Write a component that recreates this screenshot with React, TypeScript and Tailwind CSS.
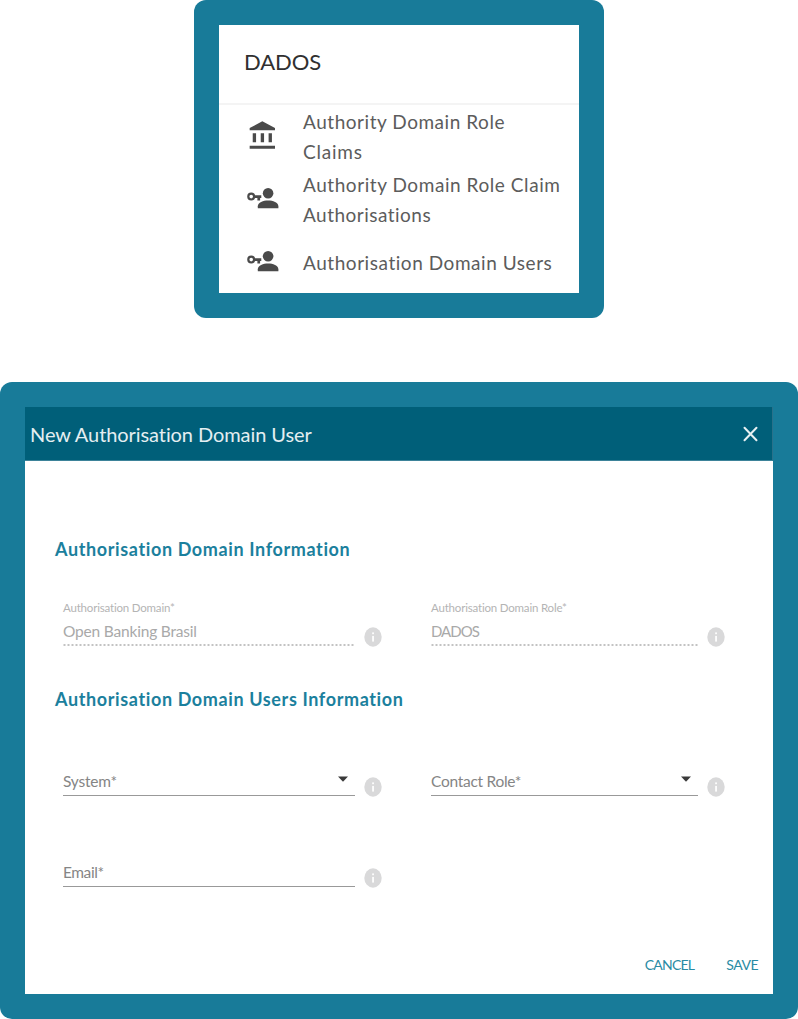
import type { ReactNode } from "react";

function BankIcon() {
  return (
    <svg width="32" height="32" viewBox="0 0 24 24" fill="#4a4a4a" className="ml-px">
      <path d="M4.300 10v6.600h2.500V10H4.300zm6 0v6.600h2.500V10h-2.500zM2 21.600h19v-2.300H2v2.300zM16.200 10v6.600h2.500V10h-2.500zM11.500 1L2 6v1.700h19V6l-9.500-5z" />
    </svg>
  );
}

function UserKeyIcon() {
  return (
    <svg width="34" height="24" viewBox="0 0 34 24" fill="#4a4a4a" className="mb-[2px]">
      <circle cx="22.100" cy="7.200" r="5.300" />
      <path d="M11.800 22.300v-2c0-4 5.500-5.900 10.300-5.900s10.300 1.900 10.300 5.900v2z" />
      <circle cx="5.200" cy="10.600" r="2.900" fill="none" stroke="#4a4a4a" strokeWidth="2.200" />
      <path d="M8 9.300h7.300v2.700h-1.200v2.400h-2.700v-2.400H8z" />
    </svg>
  );
}

function InfoIcon() {
  return (
    <svg width="18" height="20" viewBox="0 0 18 20" className="shrink-0">
      <ellipse cx="9" cy="10" rx="8.700" ry="9.700" fill="#d9d9da" />
      <rect x="8.200" y="5.400" width="1.700" height="1.800" fill="#fff" />
      <rect x="8.200" y="8.900" width="1.700" height="5.700" fill="#fff" />
    </svg>
  );
}

function MenuItem({ icon, children }: { icon: ReactNode; children: ReactNode }) {
  return (
    <li className="flex h-[62.700px] items-center">
      <span className="flex w-[84px] shrink-0 pl-[27px]">{icon}</span>
      <span className="pt-[2px] text-[19px] leading-[30px] whitespace-nowrap text-[#5c5c5c]">{children}</span>
    </li>
  );
}

function DisabledField({ label, value, width }: { label: string; value: ReactNode; width: string }) {
  return (
    <div className="flex items-end">
      <div className={`${width} h-[47px]`}>
        <div className="h-[18px] text-[11.500px] leading-[18px] tracking-[-0.190px] whitespace-nowrap text-[#b4b4b4]">{label}</div>
        <div className="h-[27px] pt-[2px] text-[15.500px] leading-6 whitespace-nowrap text-[#a9a9a9]">{value}</div>
        <svg width="100%" height="2" className="block">
          <line x1="0.500" y1="1" x2="100%" y2="1" stroke="#b0b0b0" strokeWidth="1.600" strokeDasharray="2 2" />
        </svg>
      </div>
      <div className="ml-[9px] -mb-px">
        <InfoIcon />
      </div>
    </div>
  );
}

function Field({ label, width, select = false }: { label: ReactNode; width: string; select?: boolean }) {
  return (
    <div className="flex items-end">
      <div className={`${width} flex h-[28px] justify-between border-b border-[#999] pr-[6px]`}>
        <span className="pt-px text-[15.500px] leading-[25px] whitespace-nowrap text-[#858585]">{label}</span>
        {select && (
          <svg width="12" height="6" viewBox="0 0 12 6" className="mt-[8px]" fill="#3a3a3a">
            <path d="M1 0.500h10L6 5.700z" />
          </svg>
        )}
      </div>
      <div className="ml-[9px] -mb-px">
        <InfoIcon />
      </div>
    </div>
  );
}

export default function App() {
  return (
    <div className="flex h-[1019px] w-[798px] flex-col items-center justify-between bg-white font-['Lato',sans-serif]">
      <section className="h-[318px] w-[410px] rounded-[12px] bg-[#187b99] p-[25px]">
        <div className="h-[268px] overflow-hidden bg-white">
          <h2 className="h-[80px] border-b-2 border-[#f4f4f4] pt-[22px] pl-[25px] text-[22px] leading-[30px] tracking-[-0.100px] text-[#303030]">DADOS</h2>
          <ul>
            <MenuItem icon={<BankIcon />}>
              <span className="tracking-[0.540px]">Authority Domain Role</span>
              <br />
              <span className="tracking-[0.790px]">Claims</span>
            </MenuItem>
            <MenuItem icon={<UserKeyIcon />}>
              <span className="tracking-[0.560px]">Authority Domain Role Claim</span>
              <br />
              <span className="tracking-[0.480px]">Authorisations</span>
            </MenuItem>
            <MenuItem icon={<UserKeyIcon />}>
              <span className="tracking-[0.550px]">Authorisation Domain Users</span>
            </MenuItem>
          </ul>
        </div>
      </section>

      <section className="h-[637px] w-full rounded-[12px] bg-[#187b99] p-[25px]">
        <div className="flex h-[587px] flex-col bg-white">
          <header className="flex h-[54px] items-center justify-between border-r border-b border-r-[#2a718a] border-b-[#3d8399] bg-[#005f79] pr-[14px] pl-[5px]">
            <h1 className="text-[20px] leading-[26px] tracking-[-0.080px] text-[#e4eef1]">New Authorisation Domain User</h1>
            <svg width="15" height="16" viewBox="0 0 15 16" fill="none" stroke="#e8f1f3" strokeWidth="2" strokeLinecap="round">
              <path d="M1.500 1.700L13.500 14.300M13.500 1.700L1.500 14.300" />
            </svg>
          </header>
          <div className="flex flex-1 flex-col pl-[30px]">
            <h3 className="mt-[75px] h-[26px] text-[18px] leading-[26px] font-bold tracking-[0.620px] text-[#1b809d]">Authorisation Domain Information</h3>
            <div className="mt-[37px] ml-[8px] grid grid-cols-[368px_1fr]">
              <DisabledField label="Authorisation Domain*" width="w-[292px]" value={<span className="tracking-[-0.190px]">Open Banking Brasil</span>} />
              <DisabledField label="Authorisation Domain Role*" width="w-[267px]" value={<span className="text-[15px] tracking-[-1px]">DADOS</span>} />
            </div>
            <h3 className="mt-[40px] h-[26px] text-[18px] leading-[26px] font-bold tracking-[0.620px] text-[#1b809d]">Authorisation Domain Users Information</h3>
            <div className="mt-[56px] ml-[8px] grid grid-cols-[368px_1fr] gap-y-[62.500px]">
              <Field label={<span className="tracking-[-0.210px]">System*</span>} width="w-[292px]" select />
              <Field label={<span className="tracking-[-0.280px]">Contact Role*</span>} width="w-[267px]" select />
              <Field label={<span className="tracking-[-0.430px]">Email*</span>} width="w-[292px]" />
            </div>
            <div className="mt-auto mb-[19px] flex h-[20px] justify-end gap-[32px] pr-[15px] text-[14px] leading-[20px] text-[#2a8ba4]">
              <button className="tracking-[-0.750px]">CANCEL</button>
              <button className="tracking-[-0.500px]">SAVE</button>
            </div>
          </div>
        </div>
      </section>
    </div>
  );
}
